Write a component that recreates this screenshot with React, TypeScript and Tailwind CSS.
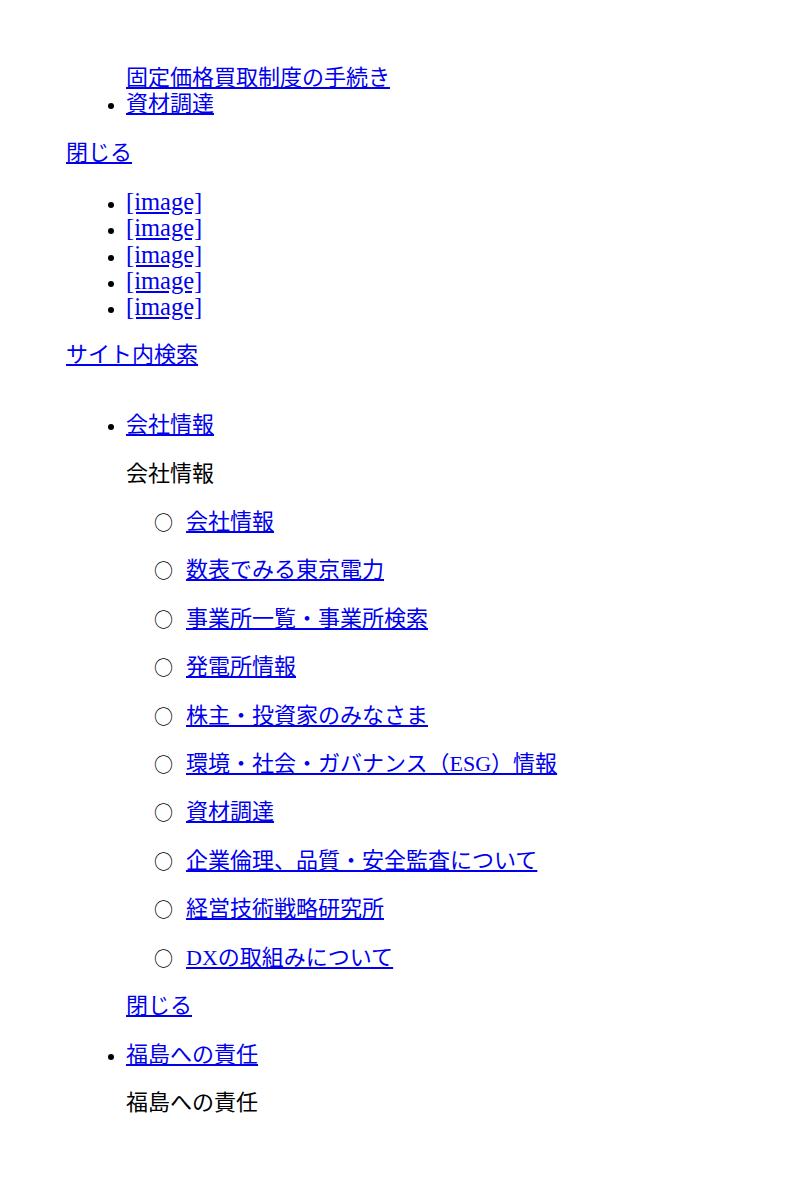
const subLinks = [
  "会社情報",
  "数表でみる東京電力",
  "事業所一覧・事業所検索",
  "発電所情報",
  "株主・投資家のみなさま",
  "環境・社会・ガバナンス（ESG）情報",
  "資材調達",
  "企業倫理、品質・安全監査について",
  "経営技術戦略研究所",
  "DXの取組みについて",
];

const linkCls = "text-[#0000ee] underline";

export default function App() {
  return (
    <div className="min-h-[1200px] bg-white pt-[65px] pl-[66px] text-[22px] leading-[26px] text-black font-['Liberation_Serif','Noto_Sans_CJK_JP',serif]">
      <ul className="list-disc pl-[60px] marker:text-[19px]">
        <li className="list-none">
          <a href="#" className={linkCls}>固定価格買取制度の手続き</a>
        </li>
        <li>
          <a href="#" className={linkCls}>資材調達</a>
        </li>
      </ul>

      <p className="mt-[23px]">
        <a href="#" className={linkCls}>閉じる</a>
      </p>

      <ul className="mt-[23px] list-disc pl-[60px] text-[24.5px] leading-[26.25px] marker:text-[19px]">
        {[0, 1, 2, 3, 4].map((i) => (
          <li key={i}>
            <a href="#" className={linkCls}>[image]</a>
          </li>
        ))}
      </ul>

      <p className="mt-[22px]">
        <a href="#" className={linkCls}>サイト内検索</a>
      </p>

      <ul className="mt-[44px] list-disc pl-[60px] marker:text-[19px]">
        <li>
          <a href="#" className={linkCls}>会社情報</a>
          <p className="mt-[22.4px]">会社情報</p>
          <ul className="pl-[28px]">
            {subLinks.map((s) => (
              <li key={s} className="mt-[22.4px] flex items-center">
                <span className="w-[32px] shrink-0 text-[19px] leading-[26px] font-['Noto_Sans_CJK_JP',sans-serif]">○</span>
                <a href="#" className={linkCls}>{s}</a>
              </li>
            ))}
          </ul>
          <p className="mt-[22.4px]">
            <a href="#" className={linkCls}>閉じる</a>
          </p>
        </li>
        <li className="mt-[22.6px]">
          <a href="#" className={linkCls}>福島への責任</a>
          <p className="mt-[22.4px]">福島への責任</p>
        </li>
      </ul>
    </div>
  );
}
